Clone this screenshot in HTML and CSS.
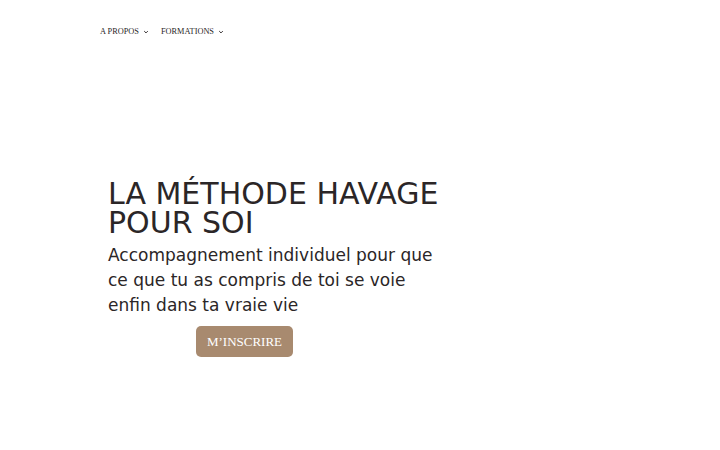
FILE: index.html
```html
<!DOCTYPE html>
<html lang="fr">
<head>
<meta charset="utf-8">
<link rel="stylesheet" href="styles.css">
</head>
<body>
<header class="nav">
  <a class="nav-item">A PROPOS <svg class="chev" viewBox="0 0 10 10"><path d="M2 3.5 L5 6.5 L8 3.5" fill="none" stroke="currentColor" stroke-width="1.6"/></svg></a>
  <a class="nav-item">FORMATIONS <svg class="chev" viewBox="0 0 10 10"><path d="M2 3.5 L5 6.5 L8 3.5" fill="none" stroke="currentColor" stroke-width="1.6"/></svg></a>
</header>
<main class="hero">
  <h1 class="title">LA MÉTHODE HAVAGE<br>POUR SOI</h1>
  <p class="lead">Accompagnement individuel pour que<br>ce que tu as compris de toi se voie<br>enfin dans ta vraie vie</p>
  <a class="btn">M’INSCRIRE</a>
</main>
</body>
</html>
```
FILE: styles.css
```css
html, body { margin: 0; padding: 0; background: #fff; }
body { width: 720px; height: 450px; overflow: hidden; color: #2b2627; }
.nav {
  display: flex;
  gap: 12px;
  padding: 27px 0 0 100px;
  height: 10px;
  font-family: "Liberation Serif", "DejaVu Serif", serif;
  font-size: 8.3px;
  line-height: 10px;
}
.nav-item { display: flex; align-items: center; gap: 4px; color: #2b2627; }
.chev { width: 6px; height: 6px; }
.hero { padding: 143px 0 0 108px; }
.title {
  margin: 0;
  font-family: "DejaVu Sans", sans-serif;
  font-weight: normal;
  font-size: 30px;
  line-height: 28.5px;
  color: #2b2627;
}
.lead {
  margin: 6px 0 0;
  font-family: "DejaVu Sans", sans-serif;
  font-size: 17px;
  line-height: 25px;
  color: #2b2627;
}
.btn {
  display: inline-flex;
  align-items: center;
  justify-content: center;
  margin: 8px 0 0 88px;
  width: 97px;
  height: 31px;
  border-radius: 5px;
  background: #a88a6f;
  color: #fff;
  font-family: "Liberation Serif", "DejaVu Serif", serif;
  font-size: 13px;
}
```
